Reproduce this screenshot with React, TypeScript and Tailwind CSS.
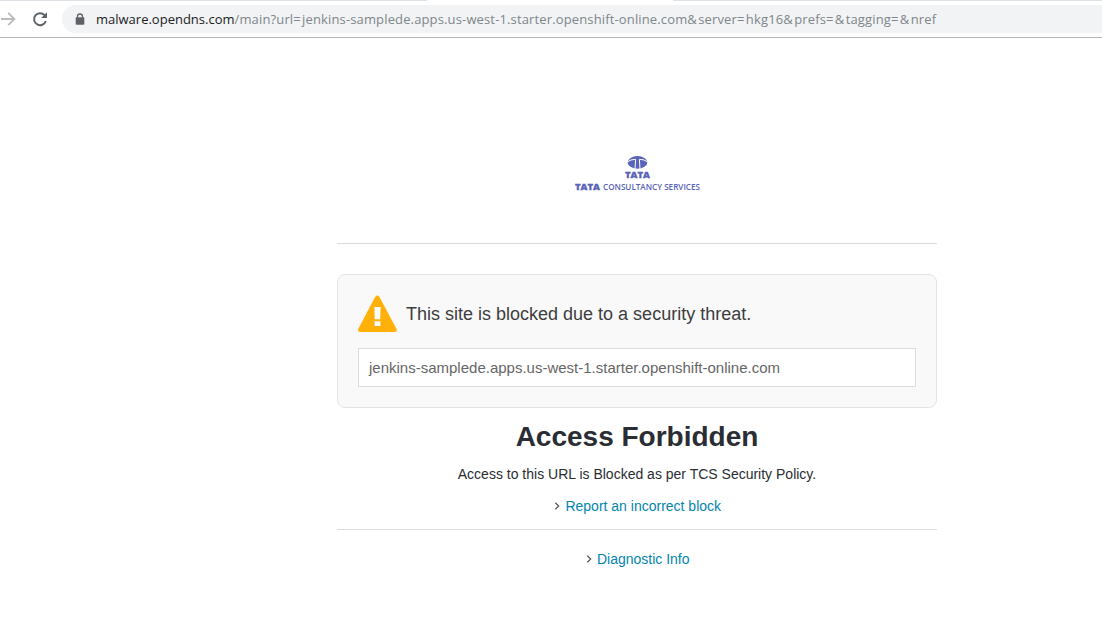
const address = "/main?url=jenkins-samplede.apps.us-west-1.starter.openshift-online.com&server=hkg16&prefs=&tagging=&nref";

function AddressPath() {
  return (
    <span className="tracking-[0.14px]">
      {address.split(/([&=])/).map((part, i) => (
        <span key={i} className={part === "&" || part === "=" ? "tracking-[1.4px]" : undefined}>{part}</span>
      ))}
    </span>
  );
}

function BrowserBar() {
  return (
    <header className="flex h-[38px] flex-col border-b border-[#b6b4b6]">
      <div className="flex h-px shrink-0">
        <div className="w-[427px] bg-[#dee1e6]" />
        <div className="w-[246px]" />
        <div className="grow bg-[#dee1e6]" />
      </div>
      <div className="mt-1 flex h-7 items-center">
        <svg className="h-7 w-[62px] shrink-0" viewBox="0 0 62 28" fill="none">
          <path d="M1 14H14M8.2 7.8L14.4 14L8.2 20.2" stroke="#babcbe" strokeWidth="1.9" />
          <path d="M44.6 10.2A6 6 0 1 0 45.8 16" stroke="#5f6368" strokeWidth="2" />
          <path d="M47 7.2V13H41.2Z" fill="#5f6368" />
        </svg>
        <div className="flex h-7 grow items-center rounded-l-full bg-[#f1f3f4] pl-[13px]">
          <svg className="h-3 w-[10px] shrink-0" viewBox="0 0 10 12">
            <path d="M2.5 5V3.5a2.5 2.5 0 0 1 5 0V5" fill="none" stroke="#5f6368" strokeWidth="1.3" />
            <rect x="0.7" y="4.3" width="8.6" height="7.4" rx="1" fill="#5f6368" />
          </svg>
          <div className="ml-[11px] whitespace-nowrap font-['Open_Sans',sans-serif] text-[13px] leading-7 text-[#80868b]">
            <span className="text-[#202124]">malware.opendns.com</span>
            <AddressPath />
          </div>
        </div>
      </div>
    </header>
  );
}

function CompanyLogo() {
  return (
    <svg className="mx-auto block h-11 w-[160px] overflow-visible" viewBox="-15 0 160 44" fill="#5963b9">
      <ellipse cx="65.5" cy="10.4" rx="9.8" ry="6.3" />
      <path d="M56 9.6Q58.5 7.4 63.6 7.3L63 17M75 9.6Q72.5 7.4 67.4 7.3L68 17" fill="none" stroke="#fff" strokeWidth="1" />
      <g fontFamily="Open Sans, sans-serif">
        <text x="53" y="26" fontSize="9" fontWeight="800" stroke="#5963b9" strokeWidth="0.3" textLength="25" lengthAdjust="spacingAndGlyphs">TATA</text>
        <text x="3" y="38" fontSize="9" fontWeight="800" stroke="#5963b9" strokeWidth="0.3" textLength="25" lengthAdjust="spacingAndGlyphs">TATA</text>
        <text x="31" y="38" fontSize="9.6" fontWeight="600" textLength="97" lengthAdjust="spacingAndGlyphs">CONSULTANCY SERVICES</text>
      </g>
    </svg>
  );
}

function ChevronLink({ label }: { label: string }) {
  return (
    <a className="flex items-center justify-center gap-[5px] pl-[1.5px] text-[14px] leading-5 text-[#0484ad]">
      <svg className="h-2 w-[6px]" viewBox="0 0 6 8" fill="none">
        <path d="M1.3 0.8L4.7 4L1.3 7.2" stroke="#555" strokeWidth="1.2" />
      </svg>
      <span>{label}</span>
    </a>
  );
}

export default function App() {
  return (
    <div className="h-[632px] w-[1102px] overflow-hidden bg-white font-['Liberation_Sans',Arial,sans-serif]">
      <BrowserBar />
      <main className="ml-[337px] w-[600px] pt-[114px]">
        <CompanyLogo />
        <hr className="mt-[47px] border-[#dcdcdc]" />
        <section className="mt-[30px] h-[134px] rounded-lg border border-[#e3e4e4] bg-[#f9f9f9] px-5 pt-5">
          <div className="flex h-[38px] items-center">
            <svg className="h-[38px] w-[39px]" viewBox="0 0 39 38">
              <path d="M17.1 1.9Q19.3 -1 21.5 1.9L38.3 33.4Q39.8 36.8 36.5 37H2.3Q-1 36.8 0.5 33.4Z" fill="#ffb10a" />
              <path d="M16.4 12H22.6L22.2 24.2H16.8ZM16.6 26.2H22.4V31H16.6Z" fill="#fff" />
            </svg>
            <h2 className="ml-[9px] text-[18px] leading-[38px] text-[#3d3d40]">This site is blocked due to a security threat.</h2>
          </div>
          <div className="mt-[15px] h-[39px] border border-[#dcdcdc] bg-white pl-[10px] text-[15px] leading-[37px] text-[#666]">
            jenkins-samplede.apps.us-west-1.starter.openshift-online.com
          </div>
        </section>
        <h1 className="mt-2 text-center text-[28px] font-bold leading-[42px] text-[#2a2d33]">Access Forbidden</h1>
        <p className="mt-[6px] text-center text-[14px] leading-5 text-[#2a2d33]">Access to this URL is Blocked as per TCS Security Policy.</p>
        <div className="mt-3"><ChevronLink label="Report an incorrect block" /></div>
        <hr className="mt-[13px] border-[#dcdcdc]" />
        <div className="mt-[19px]"><ChevronLink label="Diagnostic Info" /></div>
      </main>
    </div>
  );
}
